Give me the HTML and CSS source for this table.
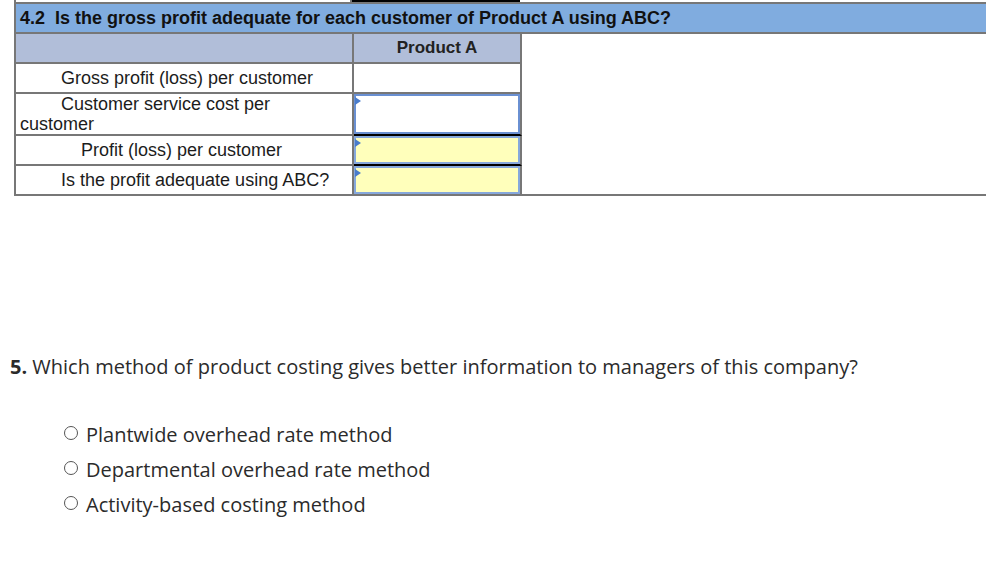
FILE: index.html
```html
<!DOCTYPE html>
<html>
<head>
<meta charset="utf-8">
<link rel="stylesheet" href="styles.css">
</head>
<body>
<div class="sheet">
  <div class="prev"><div class="prev-c1"></div><div class="prev-c2"></div></div>
  <table class="tbl">
    <tr>
      <th class="title" colspan="3">4.2&nbsp; Is the gross profit adequate for each customer of Product A using ABC?</th>
    </tr>
    <tr>
      <td class="c1 sub"></td>
      <td class="c2 sub head">Product A</td>
      <td class="c3"></td>
    </tr>
    <tr class="r">
      <td class="c1 lbl ind1">Gross profit (loss) per customer</td>
      <td class="c2"></td>
      <td class="c3"></td>
    </tr>
    <tr class="r tall">
      <td class="c1 lbl ind1">Customer service cost per customer</td>
      <td class="c2 dark"><div class="inp white"><span class="tri"></span></div></td>
      <td class="c3"></td>
    </tr>
    <tr class="r">
      <td class="c1 lbl ind2">Profit (loss) per customer</td>
      <td class="c2 dark"><div class="inp yellow"><span class="tri"></span></div></td>
      <td class="c3"></td>
    </tr>
    <tr class="r last">
      <td class="c1 lbl ind1">Is the profit adequate using ABC?</td>
      <td class="c2"><div class="inp yellow"><span class="tri"></span></div></td>
      <td class="c3"></td>
    </tr>
  </table>
</div>

<div class="question">
  <p class="qtext"><b>5.</b> Which method of product costing gives better information to managers of this company?</p>
  <ul class="options">
    <li><span class="radio"></span>Plantwide overhead rate method</li>
    <li><span class="radio"></span>Departmental overhead rate method</li>
    <li><span class="radio"></span>Activity-based costing method</li>
  </ul>
</div>
</body>
</html>
```

FILE: styles.css
```css
html, body {
  margin: 0;
  padding: 0;
  background: #ffffff;
}

.sheet {
  margin-left: 14px;
  font-family: "Liberation Sans", Arial, sans-serif;
  color: #1a1a1a;
}

.prev {
  display: flex;
  height: 2px;
}
.prev-c1 {
  width: 338px;
  border-left: 2px solid #777777;
  box-sizing: border-box;
  border-right: 2px solid #777777;
}
.prev-c2 {
  width: 168px;
  background: #000000;
}

.tbl {
  width: 972px;
  border-collapse: separate;
  border-spacing: 0;
  border-top: 2px solid #777777;
  border-left: 2px solid #777777;
  border-bottom: 2px solid #777777;
}

.tbl td, .tbl th {
  padding: 0;
  box-sizing: border-box;
}

.title {
  height: 30px;
  background: #80acdf;
  border-bottom: 2px solid #777777;
  text-align: left;
  padding-left: 4px !important;
  font-size: 18px;
  font-weight: bold;
  color: #111111;
}

.c1 {
  width: 338px;
  border-right: 2px solid #777777;
  border-bottom: 2px solid #777777;
}
.c2 {
  width: 168px;
  border-right: 2px solid #777777;
  border-bottom: 2px solid #777777;
  vertical-align: top;
}
.c2.dark {
  border-bottom-color: #000000;
}
.c3 {
  border: none;
}

.sub {
  height: 30px;
  background: #b1bed9;
}
.head {
  text-align: center;
  vertical-align: middle;
  font-weight: bold;
  font-size: 17px;
  color: #222222;
}

.r td.c1, .r td.c2 {
  height: 30px;
}
.r.tall td.c1, .r.tall td.c2 {
  height: 42px;
}
.r.last td.c1, .r.last td.c2 {
  border-bottom: none;
  height: 28px;
}

.lbl {
  font-size: 18px;
  line-height: 20px;
  padding-left: 4px !important;
  padding-right: 12px !important;
  vertical-align: middle;
  color: #1c1c1c;
}
.ind1 { text-indent: 41px; }
.ind2 { text-indent: 61px; }

.inp {
  position: relative;
  box-sizing: border-box;
  height: 28px;
  border: 2px solid #86a8dc;
}
.tall .inp {
  height: 40px;
  border-color: #6a90d2;
}
.inp.white { background: #ffffff; }
.inp.yellow { background: #ffffbb; }

.tri {
  position: absolute;
  left: -1px;
  top: 1px;
  width: 0;
  height: 0;
  border-top: 4px solid transparent;
  border-bottom: 4px solid transparent;
  border-left: 6px solid #4a7ccb;
}

.question {
  font-family: "Open Sans", "Lato", sans-serif;
  color: #2b2b2b;
}
.qtext {
  margin: 159px 0 0 10px;
  font-size: 20px;
  line-height: 24px;
}
.qtext b {
  font-weight: bold;
}
.options {
  list-style: none;
  margin: 38px 0 0 64px;
  padding: 0;
  font-size: 20px;
}
.options li {
  display: flex;
  align-items: center;
  height: 35px;
}
.radio {
  width: 12px;
  height: 12px;
  border: 1.5px solid #555555;
  border-radius: 50%;
  margin-right: 8px;
  margin-top: -3px;
  flex-shrink: 0;
}
```
